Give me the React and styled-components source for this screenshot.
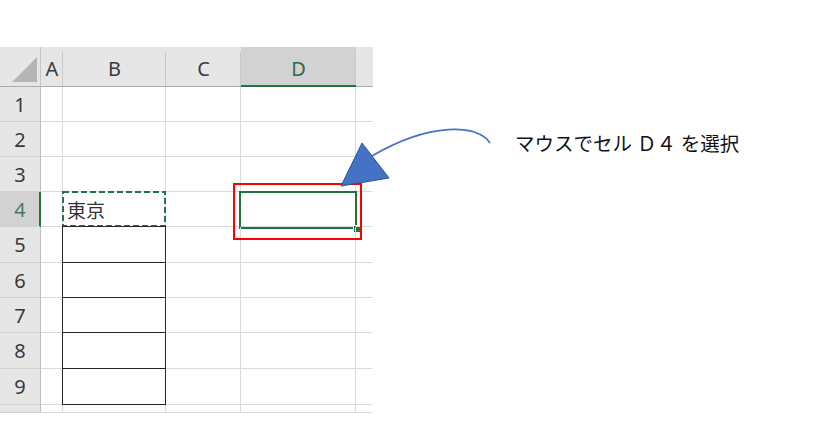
import React from 'react';
import styled, { createGlobalStyle, css } from 'styled-components';

const GlobalStyle = createGlobalStyle`
  html, body { margin: 0; padding: 0; background: #fff; }
  body {
    width: 837px;
    height: 424px;
    overflow: hidden;
    font-family: "Noto Sans", "Noto Sans CJK JP", sans-serif;
  }
`;

const GREEN = '#217346';

const Page = styled.div`
  position: relative;
  width: 837px;
  height: 424px;
  display: flex;
  align-items: flex-start;
`;

const Sheet = styled.div`
  margin-top: 47px;
  width: 373px;
  display: flex;
  flex-direction: column;
`;

const Row = styled.div`
  display: flex;
  height: ${p => p.h}px;
`;

const Corner = styled.div`
  position: relative;
  width: 41px;
  box-sizing: border-box;
  background: #e6e6e6;
  border-right: 1px solid #c4c4c4;
  border-bottom: 1px solid #ababab;
  &::after {
    content: '';
    position: absolute;
    right: 3px;
    bottom: 4px;
    width: 0;
    height: 0;
    border-left: 25px solid transparent;
    border-bottom: 25px solid #b5b5b5;
  }
`;

const ColHeader = styled.div`
  position: relative;
  width: ${p => p.w}px;
  flex: none;
  box-sizing: border-box;
  background: #e6e6e6;
  border-bottom: 1px solid #ababab;
  display: flex;
  align-items: center;
  justify-content: center;
  padding-top: 3px;
  font-size: 20px;
  color: #3a3a3a;
  &::after {
    content: '';
    position: absolute;
    right: 0;
    top: 5px;
    bottom: 0;
    width: 1px;
    background: ${p => (p.last ? 'transparent' : '#c9c9c9')};
  }
  ${p => p.selected && css`
    background: #d2d2d2;
    color: #2f6b48;
    border-bottom: 2px solid ${GREEN};
    padding-top: 4px;
  `}
`;

const RowHeader = styled.div`
  width: 41px;
  flex: none;
  box-sizing: border-box;
  background: #e6e6e6;
  border-right: 1px solid #bfbfbf;
  border-bottom: 1px solid #d2d2d2;
  display: flex;
  align-items: center;
  justify-content: center;
  font-size: 20px;
  color: #3a3a3a;
  ${p => p.selected && css`
    background: #d2d2d2;
    color: #4d7a5e;
    border-right: 2px solid ${GREEN};
    padding-left: 1px;
  `}
`;

const Cell = styled.div`
  position: relative;
  width: ${p => p.w}px;
  flex: none;
  box-sizing: border-box;
  border-right: 1px solid ${p => (p.last ? 'transparent' : '#dadada')};
  border-bottom: 1px solid #dadada;
  display: flex;
  align-items: center;
  padding-left: 4px;
  font-size: 19px;
  color: #333;
`;

const Boxed = styled.div`
  position: absolute;
  top: -1px;
  left: -1px;
  right: -1px;
  bottom: -1px;
  border: 1px solid #262626;
`;

const Marquee = styled.svg`
  position: absolute;
  top: -1px;
  left: -1px;
  width: calc(100% + 2px);
  height: calc(100% + 2px);
  overflow: visible;
`;

const Active = styled.div`
  position: absolute;
  top: -1px;
  left: -2px;
  right: -2px;
  bottom: -3px;
  border: 2px solid ${GREEN};
`;

const Handle = styled.div`
  position: absolute;
  right: -5px;
  bottom: -5px;
  width: 6px;
  height: 6px;
  background: ${GREEN};
  border-left: 1px solid #fff;
  border-top: 1px solid #fff;
`;

const CellText = styled.span`
  position: relative;
  top: 1px;
`;

const Note = styled.div`
  margin-left: 142px;
  margin-top: 134px;
  font-family: "Liberation Serif", "Noto Sans CJK JP", serif;
  font-size: 19.5px;
  line-height: 22px;
  color: #111;
  white-space: nowrap;
`;

const Overlay = styled.svg`
  position: absolute;
  left: 0;
  top: 0;
  width: 837px;
  height: 424px;
  pointer-events: none;
`;

const cols = [
  { key: 'A', w: 22 },
  { key: 'B', w: 103 },
  { key: 'C', w: 75 },
  { key: 'D', w: 115 },
  { key: 'E', w: 17, last: true },
];

const rowHeights = [35, 35, 35, 35, 36, 35, 35, 36, 36, 8];

function renderCell(r, col) {
  if (col.key === 'B' && r === 4) {
    return (
      <>
        <CellText>東京</CellText>
        <Marquee viewBox="0 0 104 36" preserveAspectRatio="none">
          <rect x="1" y="1" width="102" height="34" fill="none" stroke={GREEN} strokeWidth="2" strokeDasharray="6 3" />
        </Marquee>
      </>
    );
  }
  if (col.key === 'B' && r >= 5 && r <= 9) return <Boxed />;
  if (col.key === 'D' && r === 4) {
    return (
      <Active>
        <Handle />
      </Active>
    );
  }
  return null;
}

export default function App() {
  return (
    <Page>
      <GlobalStyle />
      <Sheet>
        <Row h={40}>
          <Corner />
          {cols.map(c => (
            <ColHeader key={c.key} w={c.w} last={c.last} selected={c.key === 'D'}>
              {c.key === 'E' ? '' : c.key}
            </ColHeader>
          ))}
        </Row>
        {rowHeights.map((h, i) => {
          const r = i + 1;
          return (
            <Row key={r} h={h}>
              <RowHeader selected={r === 4}>{r <= 9 ? r : ''}</RowHeader>
              {cols.map(c => (
                <Cell key={c.key} w={c.w} last={c.last}>
                  {renderCell(r, c)}
                </Cell>
              ))}
            </Row>
          );
        })}
      </Sheet>
      <Note>マウスでセル Ｄ４ を選択</Note>
      <Overlay viewBox="0 0 837 424">
        <rect x="234" y="184" width="127" height="55" fill="none" stroke="#ff0000" strokeWidth="2" />
        <path d="M490 143 C478 124 430 122 372 156" fill="none" stroke="#4472c4" strokeWidth="1.6" />
        <polygon points="362,143 341,186 389,178" fill="#4472c4" stroke="#2f528f" strokeWidth="1" strokeLinejoin="round" />
      </Overlay>
    </Page>
  );
}
